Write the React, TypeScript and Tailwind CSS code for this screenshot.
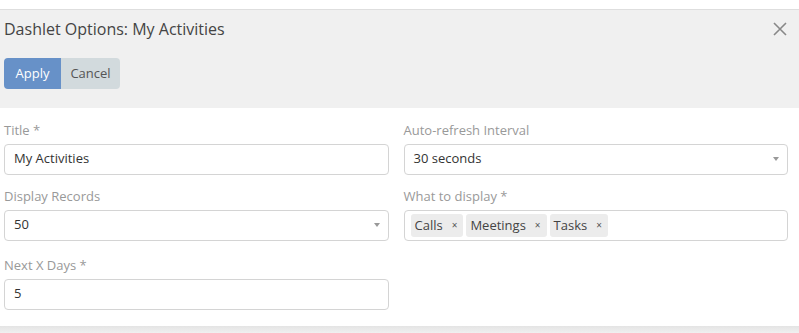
import React from 'react';

const Caret = () => (
  <span className="ml-auto mr-[8px] h-0 w-0 border-x-[3px] border-t-[4px] border-x-transparent border-t-[#999]" />
);

const Field = ({ label, children }: { label: string; children: React.ReactNode }) => (
  <div className="flex flex-col">
    <label className="h-[20px] text-[13px] leading-[20px] text-[#999]">{label}</label>
    <div className="mt-[4px] flex h-[31px] items-center rounded-[4px] border border-[#d4d4d4] bg-white pl-[9px] pb-[1px] text-[13px] text-[#333]">
      {children}
    </div>
  </div>
);

const Tag = ({ name }: { name: string }) => (
  <span className="mr-[3px] flex h-[23px] items-center rounded-[3px] bg-[#ececec] pl-[4px] pr-[6px] text-[13px] text-[#444]">
    {name}
    <span className="ml-[9px] text-[10px] text-[#555]">×</span>
  </span>
);

const App = () => {
  return (
    <div className="h-[333px] w-[799px] overflow-hidden bg-white" style={{ fontFamily: '"Open Sans", sans-serif' }}>
      <div className="h-[9px] bg-white" />
      {/* header */}
      <div className="h-[99px] border-t border-[#dedede] bg-[#f0f0f0] px-[4px]">
        <div className="flex h-[38px] items-center justify-between">
          <h2 className="text-[16px] leading-[20px] text-[#444]">Dashlet Options: My Activities</h2>
          <svg width="14" height="14" viewBox="0 0 14 14" className="mr-[8px]">
            <path d="M1 1 L13 13 M13 1 L1 13" stroke="#888" strokeWidth="1.6" />
          </svg>
        </div>
        <div className="mt-[10px] flex h-[31px] w-fit overflow-hidden rounded-[4px] text-[13px]">
          <button className="w-[57px] bg-[#6791c8] text-white">Apply</button>
          <button className="w-[59px] bg-[#d2dadd] text-[#555]">Cancel</button>
        </div>
      </div>
      {/* body */}
      <div className="grid h-[218px] grid-cols-2 content-start gap-x-[15px] gap-y-[11px] bg-white pt-[12px] pl-[4px] pr-[11px]">
        <Field label="Title *">My Activities</Field>
        <Field label="Auto-refresh Interval">
          30 seconds
          <Caret />
        </Field>
        <Field label="Display Records">
          50
          <Caret />
        </Field>
        <div className="flex flex-col">
          <label className="h-[20px] text-[13px] leading-[20px] text-[#999]">What to display *</label>
          <div className="mt-[4px] flex h-[31px] items-center rounded-[4px] border border-[#d4d4d4] bg-white pl-[6px]">
            <Tag name="Calls" />
            <Tag name="Meetings" />
            <Tag name="Tasks" />
          </div>
        </div>
        <div className="mt-[3px]">
          <Field label="Next X Days *">5</Field>
        </div>
      </div>
      <div className="h-[7px] bg-gradient-to-b from-[#e4e4e4] to-[#f0f0f0]" />
    </div>
  );
};

export default App;
